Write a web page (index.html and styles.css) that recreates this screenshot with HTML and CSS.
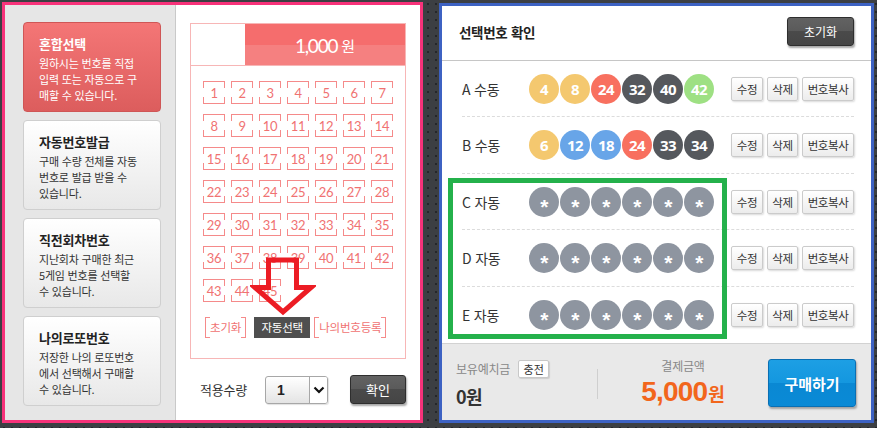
FILE: index.html
```html
<!DOCTYPE html>
<html lang="ko">
<head>
<meta charset="utf-8">
<title>로또 번호 선택</title>
<link rel="stylesheet" href="styles.css">
</head>
<body>
<div class="stage">
  <section class="left-panel">
    <aside class="sidebar">
      <div class="card active">
        <h3>혼합선택</h3>
        <p>원하시는 번호를 직접<br>입력 또는 자동으로 구<br>매할 수 있습니다.</p>
      </div>
      <div class="card">
        <h3>자동번호발급</h3>
        <p>구매 수량 전체를 자동<br>번호로 발급 받을 수<br>있습니다.</p>
      </div>
      <div class="card">
        <h3>직전회차번호</h3>
        <p>지난회차 구매한 최근<br>5게임 번호를 선택할<br>수 있습니다.</p>
      </div>
      <div class="card">
        <h3>나의로또번호</h3>
        <p>저장한 나의 로또번호<br>에서 선택해서 구매할<br>수 있습니다.</p>
      </div>
    </aside>
    <div class="picker">
      <div class="numpanel">
        <div class="numhead">
          <div class="blank"></div>
          <div class="price"><span class="amt">1,000</span><span class="won">원</span></div>
        </div>
        <div class="grid">
          <span class="n">1</span><span class="n">2</span><span class="n">3</span><span class="n">4</span><span class="n">5</span><span class="n">6</span><span class="n">7</span>
          <span class="n">8</span><span class="n">9</span><span class="n">10</span><span class="n">11</span><span class="n">12</span><span class="n">13</span><span class="n">14</span>
          <span class="n">15</span><span class="n">16</span><span class="n">17</span><span class="n">18</span><span class="n">19</span><span class="n">20</span><span class="n">21</span>
          <span class="n">22</span><span class="n">23</span><span class="n">24</span><span class="n">25</span><span class="n">26</span><span class="n">27</span><span class="n">28</span>
          <span class="n">29</span><span class="n">30</span><span class="n">31</span><span class="n">32</span><span class="n">33</span><span class="n">34</span><span class="n">35</span>
          <span class="n">36</span><span class="n">37</span><span class="n">38</span><span class="n">39</span><span class="n">40</span><span class="n">41</span><span class="n">42</span>
          <span class="n">43</span><span class="n">44</span><span class="n">45</span>
        </div>
        <div class="actions">
          <span class="bracket">초기화</span>
          <span class="auto">자동선택</span>
          <span class="bracket">나의번호등록</span>
        </div>
      </div>
      <div class="apply">
        <span class="apply-label">적용수량</span>
        <div class="select">
          <span class="val">1</span>
          <span class="arrow"><svg width="12" height="8" viewBox="0 0 12 8"><path d="M1.5 1.5 L6 6 L10.5 1.5" fill="none" stroke="#111" stroke-width="2.2"/></svg></span>
        </div>
        <button class="dark-btn ok">확인</button>
      </div>
      <svg class="red-arrow" width="66" height="63" viewBox="0 0 66 63"><polygon points="18.5,5 46.5,5 46.5,32.5 61,32.5 33,57 5,32.5 18.5,32.5" fill="none" stroke="#ec1c24" stroke-width="5" stroke-linejoin="miter"/></svg>
    </div>
  </section>

  <section class="right-panel">
    <header class="rp-head">
      <h2>선택번호 확인</h2>
      <button class="dark-btn reset">초기화</button>
    </header>
    <div class="rows">
      <div class="row">
        <span class="label">A 수동</span>
        <div class="balls"><span class="ball y">4</span><span class="ball y">8</span><span class="ball r">24</span><span class="ball d">32</span><span class="ball d">40</span><span class="ball g">42</span></div>
        <div class="btns"><button class="sbtn w1">수정</button><button class="sbtn w2">삭제</button><button class="sbtn w3">번호복사</button></div>
      </div>
      <div class="row">
        <span class="label">B 수동</span>
        <div class="balls"><span class="ball y">6</span><span class="ball b">12</span><span class="ball b">18</span><span class="ball r">24</span><span class="ball d">33</span><span class="ball d">34</span></div>
        <div class="btns"><button class="sbtn w1">수정</button><button class="sbtn w2">삭제</button><button class="sbtn w3">번호복사</button></div>
      </div>
      <div class="row">
        <span class="label">C 자동</span>
        <div class="balls"><span class="ball s">*</span><span class="ball s">*</span><span class="ball s">*</span><span class="ball s">*</span><span class="ball s">*</span><span class="ball s">*</span></div>
        <div class="btns"><button class="sbtn w1">수정</button><button class="sbtn w2">삭제</button><button class="sbtn w3">번호복사</button></div>
      </div>
      <div class="row">
        <span class="label">D 자동</span>
        <div class="balls"><span class="ball s">*</span><span class="ball s">*</span><span class="ball s">*</span><span class="ball s">*</span><span class="ball s">*</span><span class="ball s">*</span></div>
        <div class="btns"><button class="sbtn w1">수정</button><button class="sbtn w2">삭제</button><button class="sbtn w3">번호복사</button></div>
      </div>
      <div class="row">
        <span class="label">E 자동</span>
        <div class="balls"><span class="ball s">*</span><span class="ball s">*</span><span class="ball s">*</span><span class="ball s">*</span><span class="ball s">*</span><span class="ball s">*</span></div>
        <div class="btns"><button class="sbtn w1">수정</button><button class="sbtn w2">삭제</button><button class="sbtn w3">번호복사</button></div>
      </div>
    </div>
    <footer class="rp-foot">
      <div class="deposit">
        <div class="dep-top"><span class="muted">보유예치금</span><button class="charge">충전</button></div>
        <div class="dep-val">0원</div>
      </div>
      <div class="divider"></div>
      <div class="pay">
        <div class="muted">결제금액</div>
        <div class="pay-val"><span class="big">5,000</span><span class="unit">원</span></div>
      </div>
      <button class="buy">구매하기</button>
    </footer>
    <div class="green-box"></div>
  </section>
</div>
</body>
</html>
```

FILE: styles.css
```css
* { box-sizing: border-box; margin: 0; padding: 0; }
html, body { width: 877px; height: 428px; overflow: hidden; }
body {
  background-color: #3c3f43;
  background-image: radial-gradient(circle at 50% 50%, #24262a 0.9px, transparent 1.5px);
  background-size: 8px 8px;
  font-family: "Noto Sans CJK KR", "Noto Sans", sans-serif;
  color: #333;
}
button { font-family: inherit; cursor: pointer; }

.stage { display: flex; align-items: flex-start; padding: 2px 0 0 2px; gap: 16px; }

/* ---------- left panel ---------- */
.left-panel {
  position: relative;
  width: 421px; height: 421px;
  border: 3px solid #f7327a;
  background: #fff;
  display: flex;
}
.sidebar {
  width: 171px;
  background: #e6e6e6;
  border-right: 1px solid #c9c9c9;
  padding: 17px 0 0 18px;
  display: flex; flex-direction: column; gap: 8px;
}
.card {
  width: 138px; height: 90px;
  border: 1px solid #cfcfcf;
  border-radius: 4px;
  background: linear-gradient(#ffffff, #e8e8e8);
  padding: 12px 0 0 15px;
  color: #333;
}
.card h3 { font-size: 13px; font-weight: 700; line-height: 18px; color: #222; letter-spacing: -0.2px; }
.card p { font-size: 11px; line-height: 16px; margin-top: 2px; letter-spacing: -0.2px; }
.card.active { background: linear-gradient(#f47676, #dc5d5d); border-color: #cf5656; }
.card.active h3, .card.active p { color: #fff; }

.picker { position: relative; flex: 1; padding: 18px 0 0 14px; }
.numpanel { width: 216px; border: 1px solid #f7b6b6; padding-bottom: 20px; }
.numhead { display: flex; height: 42px; border-bottom: 1px solid #f7b6b6; }
.blank { width: 54px; }
.price {
  flex: 1;
  background: linear-gradient(#f56d6d 0, #f56d6d 52%, #f58080 52%, #f58080 100%);
  color: #fff;
  display: flex; align-items: center; justify-content: center; gap: 4px;
  padding-top: 1px;
}
.amt { font-family: "Lato", sans-serif; font-size: 19px; letter-spacing: -1.2px; }
.won { font-size: 15px; font-family: "Noto Sans CJK KR", sans-serif; }

.grid {
  display: grid;
  grid-template-columns: repeat(7, 22px);
  grid-auto-rows: 23px;
  column-gap: 6px; row-gap: 10px;
  padding: 15px 0 0 12px;
}
.n {
  --c: #f58a8a;
  display: flex; align-items: center; justify-content: center;
  font-family: "Lato", sans-serif; font-size: 13px; color: #f07272;
  border-top: 1px solid var(--c); border-bottom: 1px solid var(--c);
  background:
    linear-gradient(var(--c), var(--c)) left top / 1px 6px no-repeat,
    linear-gradient(var(--c), var(--c)) right top / 1px 6px no-repeat,
    linear-gradient(var(--c), var(--c)) left bottom / 1px 6px no-repeat,
    linear-gradient(var(--c), var(--c)) right bottom / 1px 6px no-repeat;
  letter-spacing: -0.3px;
}

.actions { display: flex; align-items: center; margin: 15px 0 0 14px; height: 21px; white-space: nowrap; }
.bracket {
  --c: #f58a8a;
  height: 21px; line-height: 20px;
  font-size: 11.5px; color: #f07272;
  border-left: 1px solid var(--c); border-right: 1px solid var(--c);
  background:
    linear-gradient(var(--c), var(--c)) left top / 4px 1px no-repeat,
    linear-gradient(var(--c), var(--c)) right top / 4px 1px no-repeat,
    linear-gradient(var(--c), var(--c)) left bottom / 4px 1px no-repeat,
    linear-gradient(var(--c), var(--c)) right bottom / 4px 1px no-repeat;
  padding: 0 4px;
  letter-spacing: -0.2px;
  white-space: nowrap;
}
.auto {
  height: 21px; line-height: 20px; margin: 0 4px 0 8px;
  width: 56px; text-align: center;
  background: #4f4f4f; color: #fff; font-size: 11.5px; letter-spacing: -0.3px;
  white-space: nowrap;
}

.apply { display: flex; align-items: center; margin-top: 16px; padding-left: 10px; height: 29px; }
.apply-label { font-size: 13px; color: #333; width: 65px; letter-spacing: -0.2px; }
.select {
  width: 63px; height: 28px;
  border: 1px solid #a7a7a7; border-radius: 3px;
  background: linear-gradient(#ffffff, #e4e4e4);
  display: flex; align-items: stretch;
  box-shadow: 1px 1px 1px rgba(0,0,0,.12);
}
.select .val { flex: 1; font-family: "Liberation Sans", sans-serif; font-weight: 700; font-size: 14px; color: #222; padding-left: 11px; line-height: 27px; }
.select .arrow { width: 18px; background: #fff; border-left: 1px solid #a7a7a7; display: flex; align-items: center; justify-content: center; border-radius: 0 2px 2px 0; }

.dark-btn {
  border: 1px solid #2e2e2e; border-radius: 3px;
  background: linear-gradient(#626262 0, #5a5a5a 50%, #4a4a4a 50%, #454545 100%);
  color: #fff;
  box-shadow: 1px 2px 2px rgba(0,0,0,.35);
}
.ok { width: 56px; height: 29px; margin-left: 22px; font-size: 13px; }

.red-arrow { position: absolute; left: 74px; top: 250px; }

/* ---------- right panel ---------- */
.right-panel {
  position: relative;
  margin-top: 1px;
  width: 435px; height: 420px;
  border: 3px solid #3d62c3;
  background: #fff;
  display: flex; flex-direction: column;
}
.rp-head {
  height: 55px;
  border-bottom: 1px solid #c6c6c6;
  display: flex; align-items: center; justify-content: space-between;
  padding: 0 17px 0 17px;
}
.rp-head h2 { font-size: 13.5px; font-weight: 700; color: #222; letter-spacing: -0.3px; margin-top: -1px; }
.reset { width: 67px; height: 29px; font-size: 12px; margin-top: -2px; }

.rows { padding: 0 17px 0 20px; }
.row {
  height: 56.5px;
  display: flex; align-items: center;
  border-bottom: 1px dashed #dcdcdc;
}
.row:last-child { border-bottom: none; }
.label { width: 67px; font-size: 14px; color: #333; letter-spacing: -0.2px; }
.balls { display: flex; gap: 1px; }
.ball {
  width: 30px; height: 30px; border-radius: 50%;
  display: flex; align-items: center; justify-content: center;
  color: #fff; font-family: "Noto Sans", sans-serif; font-weight: 700; font-size: 15px;
  letter-spacing: -0.5px;
}
.ball.y { background: #f4c86f; }
.ball.r { background: #f8705f; }
.ball.d { background: #55585d; }
.ball.g { background: #9ee083; }
.ball.b { background: #68a5e8; }
.ball.s { background: #8e95a0; font-family: "Liberation Sans", sans-serif; font-size: 21px; padding-top: 9px; line-height: 1; }
.btns { display: flex; gap: 4px; margin-left: 17px; }
.sbtn {
  height: 24px;
  border: 1px solid #cbcbcb; border-radius: 2px;
  background: linear-gradient(#ffffff, #ececec);
  box-shadow: 1px 1px 2px rgba(0,0,0,.15);
  font-size: 11.5px; color: #333; letter-spacing: -0.4px;
}
.w1 { width: 32px; }
.w2 { width: 31px; }
.w3 { width: 52px; }

.rp-foot {
  margin-top: auto;
  height: 77px;
  border-top: 1px solid #d2d2d2;
  background: #e9e9e9;
  display: flex; align-items: center;
  padding: 0 15px 0 14px;
}
.deposit { width: 141px; padding-top: 2px; }
.dep-top { display: flex; align-items: center; gap: 8px; height: 20px; }
.muted { font-size: 12px; color: #888; letter-spacing: -0.2px; line-height: 16px; }
.charge {
  width: 31px; height: 18px; font-size: 11px; color: #333;
  border: 1px solid #c8c8c8; border-radius: 2px; background: #fff;
  box-shadow: 1px 1px 1px rgba(0,0,0,.12);
}
.dep-val { font-size: 18px; font-weight: 700; color: #333; margin-top: 6px; line-height: 22px; letter-spacing: -0.5px; }
.divider { width: 1px; height: 30px; background: #cfcfcf; margin-top: 4px; }
.pay { flex: 1; text-align: center; padding-top: 1px; }
.pay-val { color: #f2661c; font-weight: 700; line-height: 28px; margin-top: 4px; }
.pay-val .big { font-family: "Liberation Sans", sans-serif; font-size: 28px; letter-spacing: -0.8px; }
.pay-val .unit { font-size: 18px; margin-left: 1px; }
.buy {
  width: 88px; height: 48px;
  border: 1px solid #0a6fb3; border-radius: 3px;
  background: linear-gradient(#1d9fe4 0, #1497df 50%, #0a88d3 50%, #0a8ad6 100%);
  color: #fff; font-size: 15px; font-weight: 700;
  box-shadow: 1px 2px 2px rgba(0,0,0,.3);
  margin-top: 2px;
}

.green-box {
  position: absolute;
  left: 6px; top: 172px;
  width: 279px; height: 161px;
  border: 5px solid #24b14b;
}
```
